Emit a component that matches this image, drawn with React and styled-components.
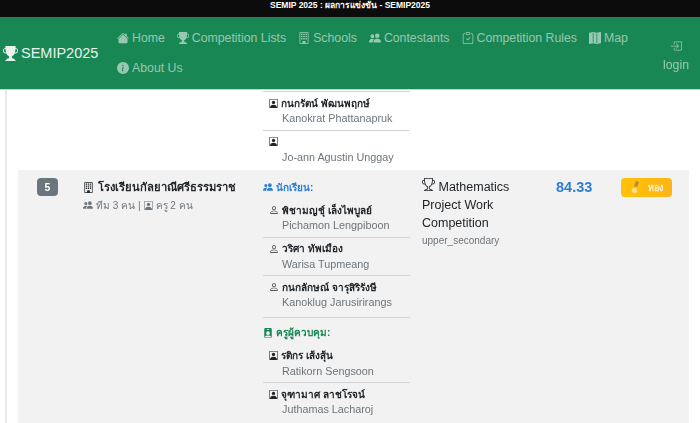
import styled, { createGlobalStyle } from "styled-components";
import {
  BsTrophyFill,
  BsTrophy,
  BsHouseFill,
  BsBuilding,
  BsPeopleFill,
  BsClipboardCheck,
  BsMapFill,
  BsInfoCircleFill,
  BsBoxArrowInRight,
  BsPerson,
  BsPersonSquare,
  BsPersonBadgeFill,
} from "react-icons/bs";

const Global = createGlobalStyle`
  html, body {
    margin: 0;
    height: 423px;
    overflow: hidden;
    background: #fff;
    font-family: "Liberation Sans", "Noto Sans", sans-serif;
  }
  svg {
    flex-shrink: 0;
  }
`;

// the reference is a soft, upscaled capture
const Page = styled.div`
  filter: blur(0.45px);
`;

const TopBar = styled.div`
  height: 17px;
  background: #0c0c0c;
  color: #fff;
  font-size: 8.5px;
  font-weight: 700;
  line-height: 10px;
  text-align: center;
`;

const Navbar = styled.nav`
  height: 72px;
  background: #198754;
  border-bottom: 1px solid #a8e6c8;
  display: flex;
  align-items: center;
`;

const Brand = styled.div`
  width: 110px;
  padding-left: 3px;
  box-sizing: border-box;
  display: flex;
  align-items: center;
  gap: 3px;
  color: #e8f3ee;
  font-size: 14.5px;
  flex-shrink: 0;
`;

const NavList = styled.div`
  width: 542px;
  padding-left: 7px;
  box-sizing: border-box;
  display: flex;
  flex-wrap: wrap;
  flex-shrink: 0;
`;

const NavItem = styled.div`
  height: 30px;
  padding-right: 12px;
  display: flex;
  align-items: center;
  gap: 3px;
  color: rgba(255, 255, 255, 0.55);
  font-size: 12.3px;
  white-space: nowrap;
`;

const Login = styled.div`
  margin-left: 11px;
  margin-top: 6px;
  display: flex;
  flex-direction: column;
  align-items: center;
  gap: 6px;
  color: rgba(255, 255, 255, 0.55);
  font-size: 12.3px;
`;

const Card = styled.main`
  margin-left: 5px;
  margin-right: 11px;
  padding-left: 11px;
  border-left: 2px solid #e8e8e8;
`;

const Row = styled.section`
  display: grid;
  grid-template-columns: 57px 180px 163px 130px 65px 1fr;
  background: ${(p) => (p.$muted ? "#f2f2f2" : "#fff")};
`;

const Cell = styled.div`
  padding: ${(p) => (p.$flush ? "0 8px 1px" : "8px")};
  box-sizing: border-box;
  min-width: 0;
`;

const CompCell = styled(Cell)`
  padding-left: 4px;
  padding-right: 0;
`;

const Rank = styled.span`
  display: block;
  margin-left: 11px;
  width: 21px;
  height: 18px;
  border-radius: 4px;
  background: #6c757d;
  color: #fff;
  font-size: 10.5px;
  font-weight: 700;
  line-height: 18px;
  text-align: center;
`;

const SchoolName = styled.div`
  display: flex;
  align-items: center;
  gap: 4px;
  height: 18px;
  color: #212529;
  font-size: 11.2px;
  font-weight: 700;
  white-space: nowrap;
`;

const SchoolSub = styled.div`
  display: flex;
  align-items: center;
  gap: 3px;
  height: 18px;
  color: #6c757d;
  font-size: 10px;
  white-space: nowrap;
`;

const GroupHead = styled.div`
  display: flex;
  align-items: center;
  gap: 3px;
  height: 18px;
  margin-bottom: 3px;
  font-size: 10px;
  font-weight: 700;
  color: ${(p) => p.$color};
`;

const PersonList = styled.div`
  margin-bottom: ${(p) => (p.$last ? "6px" : "0")};
`;

const Person = styled.div`
  height: ${(p) => (p.$tall ? "41.5px" : "38.5px")};
  padding: 4px 0 0 6px;
  box-sizing: border-box;
  border-bottom: ${(p) => (p.$plain ? "0" : "1px solid #d4d4d4")};
`;

const FirstLine = styled.div`
  height: 14px;
  display: flex;
  align-items: center;
  gap: 3px;
  color: #212529;
  font-size: 10px;
  font-weight: 700;
  white-space: nowrap;
`;

const EnName = styled.div`
  margin-top: 1px;
  margin-left: 13px;
  color: #6c757d;
  font-size: 10.8px;
  line-height: 14px;
  white-space: nowrap;
`;

const TopRule = styled.div`
  border-top: 1px solid #d4d4d4;
  margin-top: 1px;
`;

const CompName = styled.div`
  color: #212529;
  font-size: 12.5px;
  line-height: 18px;
`;

const Level = styled.div`
  color: #6c757d;
  font-size: 10px;
  line-height: 18px;
`;

const Score = styled.div`
  color: #2d7dd2;
  font-size: 14.5px;
  font-weight: 700;
  line-height: 18px;
`;

const Medal = styled.div`
  width: 51px;
  height: 19px;
  border-radius: 4px;
  background: linear-gradient(90deg, #ffc107, #fdb515);
  color: rgba(255, 255, 255, 0.8);
  font-size: 9px;
  font-weight: 700;
  display: flex;
  align-items: center;
  justify-content: center;
  gap: 8px;
`;

const MedalIcon = () => (
  <svg width="9" height="13" viewBox="0 0 9 13">
    <path d="M5 0 L8 1 L6 6 L3 5 Z" fill="#b98a3b" />
    <circle cx="3.5" cy="9.5" r="2.8" fill="#f6e08a" />
  </svg>
);

const navItems = [
  [BsHouseFill, "Home"],
  [BsTrophyFill, "Competition Lists"],
  [BsBuilding, "Schools"],
  [BsPeopleFill, "Contestants"],
  [BsClipboardCheck, "Competition Rules"],
  [BsMapFill, "Map"],
  [BsInfoCircleFill, "About Us"],
];

const students = [
  ["พิชามญชุ์ เล็งไพบูลย์", "Pichamon Lengpiboon"],
  ["วริศา ทัพเมือง", "Warisa Tupmeang"],
  ["กนกลักษณ์ จารุสิริรังษี", "Kanoklug Jarusirirangs"],
];

const teachers = [
  ["รติกร เส้งสุ้น", "Ratikorn Sengsoon"],
  ["จุฑามาศ ลาชโรจน์", "Juthamas Lacharoj"],
];

export default function App() {
  return (
    <Page>
      <Global />
      <TopBar>SEMIP 2025 : ผลการแข่งขัน - SEMIP2025</TopBar>
      <Navbar>
        <Brand>
          <BsTrophyFill size={15} />
          SEMIP2025
        </Brand>
        <NavList>
          {navItems.map(([Icon, label]) => (
            <NavItem key={label}>
              <Icon size={12} />
              {label}
            </NavItem>
          ))}
        </NavList>
        <Login>
          <BsBoxArrowInRight size={12} />
          login
        </Login>
      </Navbar>
      <Card>
        <Row>
          <Cell />
          <Cell />
          <Cell $flush>
            <TopRule />
            <Person>
              <FirstLine>
                <BsPersonSquare size={9} />
                กนกรัตน์ พัฒนพฤกษ์
              </FirstLine>
              <EnName>Kanokrat Phattanapruk</EnName>
            </Person>
            <Person $plain>
              <FirstLine>
                <BsPersonSquare size={9} />
              </FirstLine>
              <EnName>Jo-ann Agustin Unggay</EnName>
            </Person>
          </Cell>
        </Row>
        <Row $muted>
          <Cell>
            <Rank>5</Rank>
          </Cell>
          <Cell>
            <SchoolName>
              <BsBuilding size={11} />
              โรงเรียนกัลยาณีศรีธรรมราช
            </SchoolName>
            <SchoolSub>
              <BsPeopleFill size={10} />
              ทีม 3 คน | <BsPersonSquare size={9} /> ครู 2 คน
            </SchoolSub>
          </Cell>
          <Cell>
            <GroupHead $color="#2d7dd2">
              <BsPeopleFill size={10} />
              นักเรียน:
            </GroupHead>
            <PersonList $last>
              {students.map(([th, en], i) => (
                <Person key={en} $tall={i === students.length - 1}>
                  <FirstLine>
                    <BsPerson size={10} />
                    {th}
                  </FirstLine>
                  <EnName>{en}</EnName>
                </Person>
              ))}
            </PersonList>
            <GroupHead $color="#198754">
              <BsPersonBadgeFill size={10} />
              ครูผู้ควบคุม:
            </GroupHead>
            <PersonList>
              {teachers.map(([th, en], i) => (
                <Person key={en} $plain={i === teachers.length - 1}>
                  <FirstLine>
                    <BsPersonSquare size={9} />
                    {th}
                  </FirstLine>
                  <EnName>{en}</EnName>
                </Person>
              ))}
            </PersonList>
          </Cell>
          <CompCell>
            <CompName>
              <BsTrophy size={13} /> Mathematics Project Work Competition
            </CompName>
            <Level>upper_secondary</Level>
          </CompCell>
          <Cell>
            <Score>84.33</Score>
          </Cell>
          <Cell>
            <Medal>
              <MedalIcon />
              ทอง
            </Medal>
          </Cell>
        </Row>
      </Card>
    </Page>
  );
}
